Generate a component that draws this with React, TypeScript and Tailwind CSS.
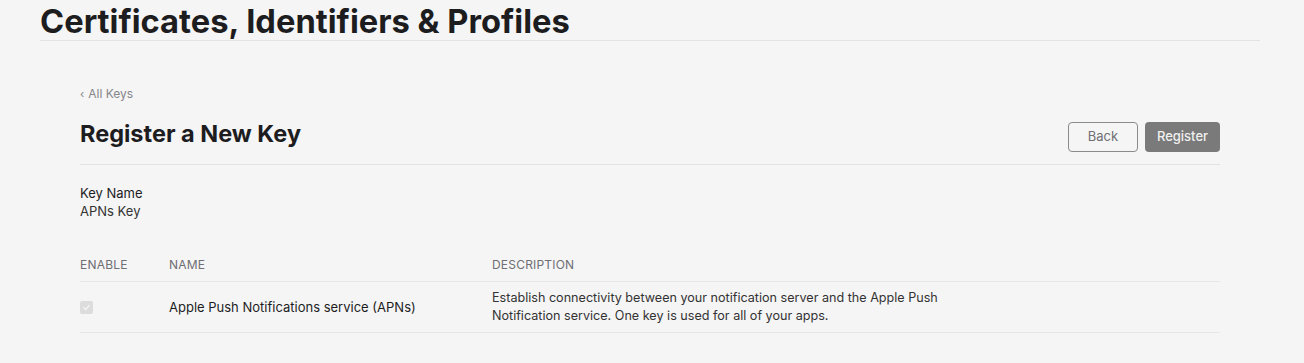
export default function App() {
  return (
    <div
      className="min-h-[363px] w-full bg-[#f5f5f5] text-[#1d1d1f]"
      style={{ fontFamily: "Inter, 'Noto Sans', sans-serif" }}
    >
      <div className="pl-10 pr-11">
        <h1 className="pt-[2px] text-[32.7px] font-bold leading-[38px] text-[#1d1d1f]">
          Certificates, Identifiers &amp; Profiles
        </h1>
        <div className="h-px bg-[#e3e3e3]" />
      </div>

      <div className="pl-20 pr-[84px] pt-[45px]">
        <a className="flex items-center gap-1 text-[12px] leading-4 text-[#86868b]">
          <span className="text-[11px]">‹</span>All Keys
        </a>

        <div className="mt-[14px] flex items-center justify-between pb-[12px] border-b border-[#e3e3e3]">
          <h2 className="text-[23.5px] font-bold leading-7">Register a New Key</h2>
          <div className="flex gap-[7px] pt-[6px]">
            <button className="h-[30px] w-[70px] rounded-[4px] border border-[#8a8a8a] bg-transparent text-[13px] text-[#6e6e73]">
              Back
            </button>
            <button className="h-[30px] w-[75px] rounded-[4px] bg-[#7a7a7a] text-[13px] font-medium text-[#f0f0f0]">
              Register
            </button>
          </div>
        </div>

        <div className="pt-[19px] text-[13px] leading-[18px]">
          <div className="text-[#1d1d1f]">Key Name</div>
          <div className="text-[#333]">APNs Key</div>
        </div>

        <div className="mt-[37px]">
          <div className="grid grid-cols-[89px_323px_1fr] border-b border-[#e6e6e6] pb-[8px] text-[12px] leading-4 tracking-[0.2px] text-[#6e6e73]">
            <div>ENABLE</div>
            <div>NAME</div>
            <div>DESCRIPTION</div>
          </div>
          <div className="grid grid-cols-[89px_323px_1fr] items-center border-b border-[#e6e6e6] py-[7px] text-[12.6px] leading-[18px] text-[#1d1d1f]">
            <div>
              <span className="flex h-[13px] w-[13px] items-center justify-center rounded-[2px] bg-[#dcdcdc]">
                <svg width="9" height="9" viewBox="0 0 10 10" fill="none">
                  <path d="M2 5.2l2 2L8 2.8" stroke="#f4f4f4" strokeWidth="1.6" strokeLinecap="round" strokeLinejoin="round" />
                </svg>
              </span>
            </div>
            <div className="text-[13px]">Apple Push Notifications service (APNs)</div>
            <div className="max-w-[470px] text-[#333]">
              Establish connectivity between your notification server and the Apple Push Notification service. One key is used for all of your apps.
            </div>
          </div>
        </div>
      </div>
    </div>
  );
}
